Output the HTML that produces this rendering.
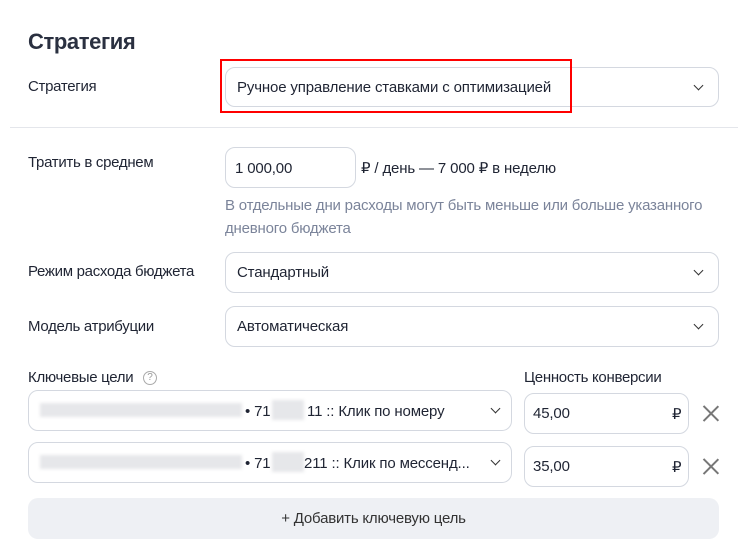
<!DOCTYPE html>
<html><head><meta charset="utf-8"><style>
*{box-sizing:border-box;margin:0;padding:0}
body{width:743px;height:555px;background:#fff;font-family:"Liberation Sans",sans-serif;color:#1f2433;position:relative;overflow:hidden;font-size:14px}
.a{position:absolute;white-space:nowrap}
.box{position:absolute;border:1px solid #d4d8e0;border-radius:10px;background:#fff}
.lbl{font-size:15px;letter-spacing:-0.3px;color:#1f2433}
.chev{position:absolute;width:7px;height:7px;border-right:1.4px solid #333;border-bottom:1.4px solid #333;transform:rotate(45deg)}
.t{font-size:15px;letter-spacing:-0.15px}
.blur{position:absolute;background:#e6e7ea;filter:blur(1.5px)}
.x{position:absolute;width:18px;height:18px}
.x:before,.x:after{content:"";position:absolute;left:8px;top:-1px;width:1.6px;height:21px;background:#777;transform:rotate(45deg)}
.x:after{transform:rotate(-45deg)}
</style></head><body>
<div class="a" style="left:28px;top:29px;font-size:22px;font-weight:bold;color:#2a3040;letter-spacing:-0.4px">Стратегия</div>
<div class="a lbl" style="left:28px;top:78px">Стратегия</div>
<div class="box" style="left:225px;top:67px;width:494px;height:40px"></div>
<div class="a t" style="left:237px;top:79px">Ручное управление ставками с оптимизацией</div>
<div class="chev" style="left:695px;top:82px"></div>
<div class="a" style="left:220px;top:59px;width:352px;height:54px;border:2px solid #f00"></div>
<div class="a" style="left:10px;top:127px;width:728px;height:1px;background:#e4e6eb"></div>

<div class="a lbl" style="left:28px;top:154px">Тратить в среднем</div>
<div class="box" style="left:225px;top:147px;width:131px;height:41px"></div>
<div class="a t" style="left:235px;top:160px">1 000,00</div>
<div class="a t" style="left:361px;top:159px">₽ / день — 7 000 ₽ в неделю</div>
<div class="a" style="left:225px;top:194px;font-size:15px;color:#7b849a;letter-spacing:-0.2px;line-height:23px">В отдельные дни расходы могут быть меньше или больше указанного<br>дневного бюджета</div>

<div class="a lbl" style="left:28px;top:263px">Режим расхода бюджета</div>
<div class="box" style="left:225px;top:252px;width:494px;height:41px"></div>
<div class="a t" style="left:237px;top:264px">Стандартный</div>
<div class="chev" style="left:695px;top:267px"></div>

<div class="a lbl" style="left:28px;top:318px">Модель атрибуции</div>
<div class="box" style="left:225px;top:306px;width:494px;height:41px"></div>
<div class="a t" style="left:237px;top:318px">Автоматическая</div>
<div class="chev" style="left:695px;top:321px"></div>

<div class="a lbl" style="left:28px;top:369px">Ключевые цели</div>
<div class="a" style="left:143px;top:371px;width:14px;height:14px;border:1px solid #aaa;border-radius:50%;font-size:10px;color:#999;text-align:center;line-height:12px">?</div>
<div class="a lbl" style="left:524px;top:369px">Ценность конверсии</div>

<div class="box" style="left:28px;top:390px;width:484px;height:41px"></div>
<div class="blur" style="left:40px;top:403px;width:202px;height:14px"></div>
<div class="a t" style="left:245px;top:403px">• 71</div>
<div class="blur" style="left:272px;top:400px;width:32px;height:20px"></div>
<div class="a t" style="left:307px;top:403px">11 :: Клик по номеру</div>
<div class="chev" style="left:492px;top:405px"></div>
<div class="box" style="left:524px;top:393px;width:165px;height:41px"></div>
<div class="a t" style="left:533px;top:405px">45,00</div>
<div class="a t" style="left:672px;top:405px">₽</div>
<div class="x" style="left:702px;top:404px"></div>

<div class="box" style="left:28px;top:442px;width:484px;height:41px"></div>
<div class="blur" style="left:40px;top:455px;width:202px;height:14px"></div>
<div class="a t" style="left:245px;top:455px">• 71</div>
<div class="blur" style="left:272px;top:452px;width:32px;height:20px"></div>
<div class="a t" style="left:304px;top:455px">211 :: Клик по мессенд...</div>
<div class="chev" style="left:492px;top:457px"></div>
<div class="box" style="left:524px;top:446px;width:165px;height:41px"></div>
<div class="a t" style="left:533px;top:458px">35,00</div>
<div class="a t" style="left:672px;top:458px">₽</div>
<div class="x" style="left:702px;top:457px"></div>

<div class="a" style="left:28px;top:498px;width:691px;height:41px;background:#eef0f4;border-radius:10px;text-align:center;line-height:41px;font-size:15px;letter-spacing:-0.2px;color:#333">+ Добавить ключевую цель</div>
</body></html>
